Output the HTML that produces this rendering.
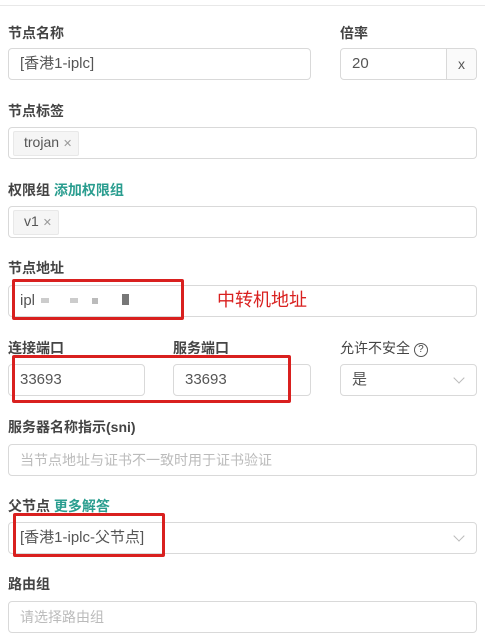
<!DOCTYPE html>
<html><head><meta charset="utf-8"><style>
*{box-sizing:border-box;margin:0;padding:0}
body{width:485px;height:642px;background:#fff;position:relative;overflow:hidden;font-family:"Liberation Sans","Noto Sans CJK SC",sans-serif;font-size:14px;color:#555}
.a{position:absolute}
.l{position:absolute;left:8px;font-weight:bold;color:#444;font-size:14px;line-height:20px}
.i{position:absolute;border:1px solid #d9d9d9;border-radius:4px;background:#fff;line-height:30px;padding-left:11px;color:#555;font-size:15px}
.ph{color:#bbb;font-size:14px}
.tag{position:absolute;border:1px solid #e8e8e8;background:#f5f5f5;border-radius:2px;line-height:21px;padding:0 6px 0 10px;color:#555;font-size:14px}
.tag span{color:#999;font-size:11px;margin-left:4px}
.g{color:#2a9d8f}
.r{position:absolute;border:3px solid #d9201f;border-radius:2px}
.ch{position:absolute;width:8px;height:8px;border-right:1px solid #bbb;border-bottom:1px solid #bbb;transform:rotate(45deg)}
</style></head><body>
<div class="a" style="left:0;top:5px;width:485px;height:1px;background:#e8e8e8"></div>

<div class="l" style="top:23px">节点名称</div>
<div class="l" style="top:23px;left:340px">倍率</div>
<div class="i" style="left:8px;top:48px;width:303px;height:32px">[香港1-iplc]</div>
<div class="i" style="left:340px;top:48px;width:137px;height:32px">20</div>
<div class="a" style="left:446px;top:49px;width:30px;height:30px;background:#fafafa;border-left:1px solid #d9d9d9;border-radius:0 4px 4px 0;text-align:center;line-height:30px">x</div>

<div class="l" style="top:101px">节点标签</div>
<div class="i" style="left:8px;top:127px;width:469px;height:32px"></div>
<div class="tag" style="left:13px;top:131px">trojan<span>✕</span></div>

<div class="l" style="top:180px">权限组 <span class="g">添加权限组</span></div>
<div class="i" style="left:8px;top:206px;width:469px;height:32px"></div>
<div class="tag" style="left:13px;top:210px">v1<span>✕</span></div>

<div class="l" style="top:258px">节点地址</div>
<div class="i" style="left:8px;top:285px;width:469px;height:32px">ipl</div>
<div class="a" style="left:41px;top:298px;width:8px;height:5px;background:#ccc"></div>
<div class="a" style="left:70px;top:298px;width:8px;height:5px;background:#ccc"></div>
<div class="a" style="left:92px;top:298px;width:6px;height:6px;background:#bbb"></div>
<div class="a" style="left:122px;top:294px;width:7px;height:11px;background:#777"></div>
<div class="r" style="left:12px;top:279px;width:172px;height:41px"></div>
<div class="a" style="left:217px;top:288px;color:#d9201f;font-size:18px;line-height:24px">中转机地址</div>

<div class="l" style="top:338px">连接端口</div>
<div class="l" style="top:338px;left:173px">服务端口</div>
<div class="l" style="top:338px;left:340px;font-weight:normal;color:#444">允许不安全 <span style="display:inline-block;width:14px;height:14px;border:1px solid #555;border-radius:50%;font-size:10px;line-height:12px;text-align:center;vertical-align:1px">?</span></div>
<div class="i" style="left:8px;top:364px;width:137px;height:32px">33693</div>
<div class="i" style="left:173px;top:364px;width:138px;height:32px">33693</div>
<div class="i" style="left:340px;top:364px;width:137px;height:32px">是</div>
<div class="ch" style="left:455px;top:374px"></div>
<div class="r" style="left:12px;top:355px;width:279px;height:48px"></div>

<div class="l" style="top:417px">服务器名称指示(sni)</div>
<div class="i ph" style="left:8px;top:444px;width:469px;height:32px">当节点地址与证书不一致时用于证书验证</div>

<div class="l" style="top:496px">父节点 <span class="g">更多解答</span></div>
<div class="i" style="left:8px;top:522px;width:469px;height:32px">[香港1-iplc-父节点]</div>
<div class="ch" style="left:455px;top:532px"></div>
<div class="r" style="left:13px;top:513px;width:152px;height:44px"></div>

<div class="l" style="top:574px">路由组</div>
<div class="i ph" style="left:8px;top:601px;width:469px;height:32px">请选择路由组</div>
</body></html>
